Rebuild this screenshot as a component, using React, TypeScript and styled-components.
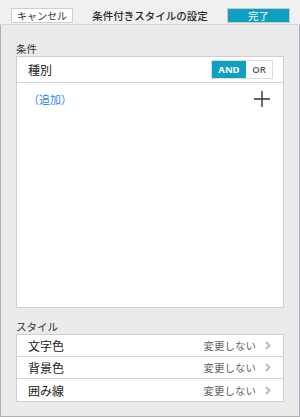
import React from 'react';
import styled, { createGlobalStyle } from 'styled-components';

const GlobalStyle = createGlobalStyle`
  html, body {
    margin: 0;
    padding: 0;
    background: #fff;
  }
  body {
    font-family: 'Noto Sans CJK JP', 'Noto Sans', sans-serif;
    color: #222;
  }
`;

const Window = styled.div`
  width: 300px;
  height: 417px;
  display: flex;
  flex-direction: column;
  box-sizing: border-box;
  background: #ebebeb;
`;

const Header = styled.div`
  height: 27px;
  box-sizing: border-box;
  display: flex;
  align-items: flex-start;
  justify-content: space-between;
  padding: 8px 10px 0 11px;
  background: #f0f0f0;
  border-bottom: 1px solid #d6d6d6;
`;

const HeadButton = styled.button<{ primary?: boolean }>`
  height: 15px;
  width: ${p => (p.primary ? '63px' : '62px')};
  padding: 0;
  box-sizing: border-box;
  font-family: inherit;
  font-size: ${p => (p.primary ? '10.5px' : '10px')};
  line-height: 13px;
  border: 1px solid ${p => (p.primary ? '#c9c9c9' : '#cfcfcf')};
  background: ${p => (p.primary ? '#0f9fc0' : '#fff')};
  color: ${p => (p.primary ? '#fff' : '#333')};
`;

const Title = styled.div`
  font-size: 10.5px;
  line-height: 15px;
  color: #2a2a2a;
  font-weight: 500;
`;

const Body = styled.div`
  flex: 1;
  display: flex;
  flex-direction: column;
  padding: 17px 15px 14px;
  border: 1px solid #a7afb7;
  border-top: none;
`;

const SectionLabel = styled.div<{ gap?: number }>`
  font-size: 10.5px;
  line-height: 14px;
  height: 14px;
  color: #333;
  margin-top: ${p => p.gap || 0}px;
`;

const Panel = styled.div<{ grow?: boolean }>`
  background: #fff;
  border: 1px solid #cfcfcf;
  display: flex;
  flex-direction: column;
  height: ${p => (p.grow ? '250px' : 'auto')};
`;

const Row = styled.div<{ h: number }>`
  height: ${p => p.h}px;
  box-sizing: border-box;
  display: flex;
  align-items: center;
  justify-content: space-between;
  padding: 0 12px 0 11px;
  border-bottom: 1px solid #d4d4d4;
  &:last-child {
    border-bottom: none;
  }
`;

const RowLabel = styled.span`
  font-size: 12px;
  color: #222;
`;

const AddLink = styled.span`
  font-size: 11px;
  color: #2f86e6;
`;

const Segment = styled.div`
  display: flex;
  height: 19px;
  border: 1px solid #dcdcdc;
  box-sizing: border-box;
  margin-right: -2px;
`;

const SegItem = styled.div<{ active?: boolean }>`
  width: ${p => (p.active ? '34px' : '26px')};
  display: flex;
  align-items: center;
  justify-content: center;
  font-family: 'Open Sans', 'Noto Sans', sans-serif;
  font-size: 9.5px;
  font-weight: ${p => (p.active ? 700 : 600)};
  background: ${p => (p.active ? '#0f9fc0' : '#fff')};
  color: ${p => (p.active ? '#fff' : '#555')};
`;

const Value = styled.span`
  display: flex;
  align-items: center;
  gap: 9px;
  font-size: 10.5px;
  color: #666;
`;

const Chevron = () => (
  <svg width="6" height="9" viewBox="0 0 6 9">
    <path d="M1 1 L4.5 4.5 L1 8" fill="none" stroke="#b9b9b9" strokeWidth="1.8" />
  </svg>
);

const Plus = () => (
  <svg width="18" height="18" viewBox="0 0 18 18">
    <path d="M9 1 V17 M1 9 H17" stroke="#333" strokeWidth="1.4" />
  </svg>
);

const styles = ['文字色', '背景色', '囲み線'];

export default function App() {
  return (
    <>
      <GlobalStyle />
      <Window>
        <Header>
          <HeadButton>キャンセル</HeadButton>
          <Title>条件付きスタイルの設定</Title>
          <HeadButton primary>完了</HeadButton>
        </Header>
        <Body>
          <SectionLabel>条件</SectionLabel>
          <Panel grow>
            <Row h={26}>
              <RowLabel>種別</RowLabel>
              <Segment>
                <SegItem active>AND</SegItem>
                <SegItem>OR</SegItem>
              </Segment>
            </Row>
            <Row h={32}>
              <AddLink>（追加）</AddLink>
              <Plus />
            </Row>
          </Panel>
          <SectionLabel gap={12}>スタイル</SectionLabel>
          <Panel>
            {styles.map(s => (
              <Row h={22} key={s}>
                <RowLabel>{s}</RowLabel>
                <Value>
                  変更しない
                  <Chevron />
                </Value>
              </Row>
            ))}
          </Panel>
        </Body>
      </Window>
    </>
  );
}
